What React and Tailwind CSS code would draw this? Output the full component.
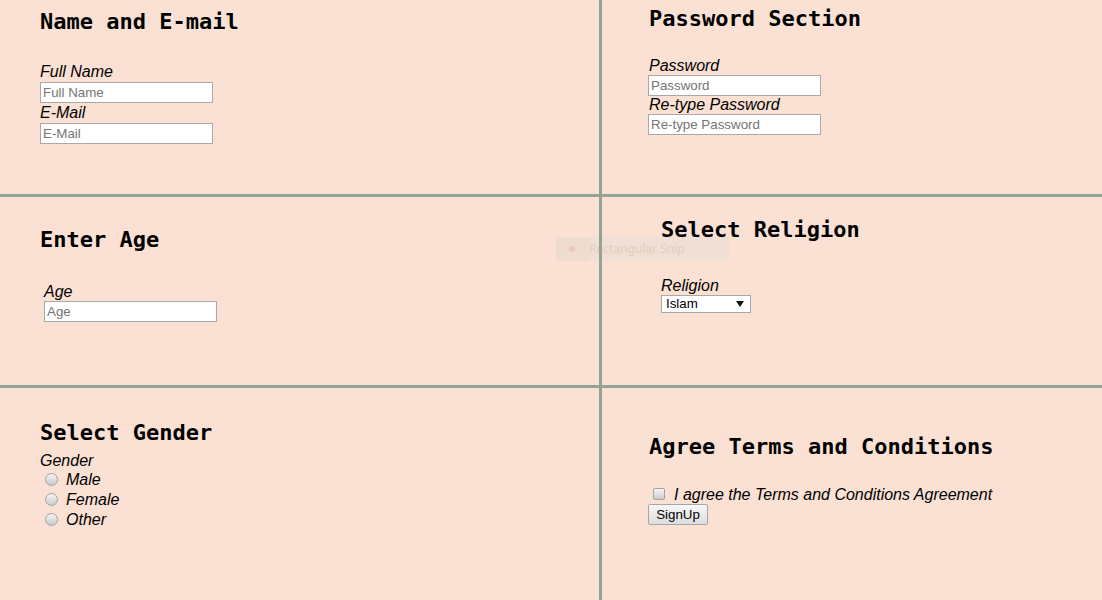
import { useState } from "react";

/* ─── piezas de formulario con el look clásico de Chrome ─────────── */
const heading = "font-['DejaVu_Sans_Mono','Liberation_Mono',monospace] font-bold text-[22px] leading-[26px] text-black whitespace-nowrap";
const label = "block italic text-[16px] text-black";
const field =
  "block w-[173px] h-[21px] border border-[#a9a9a9] bg-white px-[2px] text-[13.333px] leading-[17px] text-black outline-none placeholder:text-[#757575]";

const Line = ({ className }) => <div className={`bg-[#93a394] relative z-10 ${className}`} />;

function Radio({ name, value, children }) {
  return (
    <label className="flex items-start h-[20px] leading-[20px]">
      <input
        type="radio"
        name={name}
        value={value}
        className="appearance-none shrink-0 w-[13px] h-[13px] mt-[3px] ml-[5px] rounded-full border border-[#a3a3a3] bg-linear-to-b from-[#f4f4f4] to-[#cbcbcb] checked:from-[#bcd9f2] checked:to-[#7fb1e0]"
      />
      <span className="ml-[8px] italic text-[16px]">{children}</span>
    </label>
  );
}

export default function App() {
  const [religion, setReligion] = useState("Islam");

  return (
    <div className="relative w-[1102px] h-[600px] overflow-hidden bg-[#fae1d3] font-['Liberation_Sans',Arial,sans-serif] text-black">
      {/* fila 1 */}
      <div className="flex h-[194px]">
        <section className="w-[599px] pl-[40px] pt-[9px]">
          <h2 className={heading}>Name and E-mail</h2>
          <label className={`${label} mt-[27px] leading-[20px]`}>Full Name</label>
          <input className={field} placeholder="Full Name" />
          <label className={`${label} leading-[20px]`}>E-Mail</label>
          <input className={field} type="email" placeholder="E-Mail" />
        </section>
        <Line className="w-[3px]" />
        <section className="flex-1 pl-[47px] pt-[6px]">
          <h2 className={heading}>Password Section</h2>
          <label className={`${label} mt-[25px] leading-[18px]`}>Password</label>
          <input className={`${field} -ml-px`} type="password" placeholder="Password" />
          <label className={`${label} leading-[18px]`}>Re-type Password</label>
          <input className={`${field} -ml-px`} type="password" placeholder="Re-type Password" />
        </section>
      </div>
      <Line className="h-[3px]" />

      {/* fila 2 */}
      <div className="flex h-[188px]">
        <section className="w-[599px] pl-[40px] pt-[30px]">
          <h2 className={heading}>Enter Age</h2>
          <div className="pl-[4px] mt-[30px]">
            <label className={`${label} leading-[18px]`}>Age</label>
            <input className={field} type="text" placeholder="Age" />
          </div>
        </section>
        <Line className="w-[3px]" />
        <section className="flex-1 pl-[59px] pt-[20px]">
          <h2 className={heading}>Select Religion</h2>
          <label className={`${label} mt-[34px] leading-[18px]`}>Religion</label>
          <div className="relative w-[90px] h-[18px]">
            <select
              value={religion}
              onChange={(e) => setReligion(e.target.value)}
              className="block appearance-none w-full h-full border border-[#a9a9a9] bg-white pl-[4px] text-[13.333px] leading-[16px] text-black outline-none rounded-none"
            >
              <option>Islam</option>
              <option>Christianity</option>
              <option>Hinduism</option>
              <option>Buddhism</option>
              <option>Other</option>
            </select>
            <svg className="absolute right-[7px] top-[6px] w-[8px] h-[6px] pointer-events-none" viewBox="0 0 8 6">
              <path d="M0 0h8L4 6z" fill="#111" />
            </svg>
          </div>
        </section>
      </div>
      <Line className="h-[3px]" />

      {/* fila 3 */}
      <div className="flex h-[213px]">
        <section className="w-[599px] pl-[40px] pt-[32px]">
          <h2 className={heading}>Select Gender</h2>
          <span className={`${label} mt-[6px] leading-[18px]`}>Gender</span>
          <Radio name="gender" value="male">Male</Radio>
          <Radio name="gender" value="female">Female</Radio>
          <Radio name="gender" value="other">Other</Radio>
        </section>
        <Line className="w-[3px]" />
        <section className="flex-1 pl-[47px] pt-[46px]">
          <h2 className={heading}>Agree Terms and Conditions</h2>
          <label className="flex items-start mt-[26px] h-[18px] leading-[18px]">
            <input
              type="checkbox"
              className="appearance-none shrink-0 w-[12px] h-[12px] mt-[2px] ml-[4px] rounded-[2px] border border-[#a3a3a3] bg-linear-to-b from-[#f4f4f4] to-[#cdcdcd]"
            />
            <span className="ml-[9px] italic text-[16px] whitespace-nowrap">I agree the Terms and Conditions Agreement</span>
          </label>
          <button
            type="button"
            className="block -ml-px w-[60px] h-[21px] rounded-[2px] border border-[#a6a6a6] bg-linear-to-b from-[#f7f7f7] to-[#dddddd] text-[13.333px] leading-[17px] text-black"
          >
            SignUp
          </button>
        </section>
      </div>

      {/* resto de la herramienta de recorte que quedó en la captura */}
      <div className="absolute left-[556px] top-[237px] w-[173px] h-[24px] flex items-center bg-[#efdfd4]">
        <div className="w-[32px] h-full flex items-center justify-center bg-[#eedcd0]">
          <span className="w-[6px] h-[6px] rounded-full bg-[#e9c9b8]" />
        </div>
        <span className="pl-[1px] text-[12px] text-[#e8cbbb] font-['Noto_Sans',sans-serif]">Rectangular Snip</span>
      </div>
    </div>
  );
}
